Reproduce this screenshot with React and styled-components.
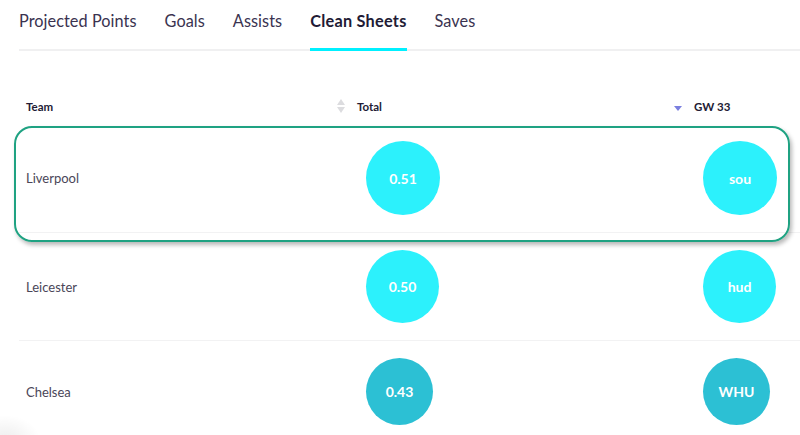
import React from 'react';
import styled, { createGlobalStyle } from 'styled-components';

/* ================= STYLES ================= */
const Global = createGlobalStyle`
  html, body { margin:0; padding:0; background:#fff; }
  body { font-family:Lato, "Noto Sans", sans-serif; overflow:hidden; }
`;

const Page = styled.div`
  position:relative;width:800px;height:435px;overflow:hidden;
  padding-left:19px;box-sizing:border-box;
`;

const TabBar = styled.div`
  display:flex;gap:28px;height:49px;border-bottom:2px solid #f0f0f1;
`;
const Tab = styled.div`
  height:51px;box-sizing:border-box;padding-top:10px;margin-bottom:-2px;
  font-size:16.3px;line-height:22px;
  letter-spacing:${p => (p.$active ? '0.25px' : '0.05px')};
  color:${p => (p.$active ? '#221b35' : '#3a3350')};
  font-weight:${p => (p.$active ? 700 : 400)};
  border-bottom:3px solid ${p => (p.$active ? '#00f0ff' : 'transparent')};
`;

const Table = styled.div`margin-top:37px;`;
const Row = styled.div`
  position:relative;display:grid;grid-template-columns:311px 337px 1fr;
  align-items:center;padding-left:7px;
  border-bottom:${p => (p.$head ? 'none' : '1px solid #f2f2f3')};
  ${p => p.$head && 'height:36px;'}
`;
const Highlight = styled.div`
  position:absolute;top:2px;left:-5px;right:10px;bottom:-10px;
  border:2px solid #1fa282;border-radius:18px;pointer-events:none;
  box-shadow:2px 3px 4px rgba(0,0,0,0.28);
`;
const HeadCell = styled.div`
  display:flex;align-items:center;gap:12px;
  font-size:11.5px;font-weight:700;color:#221b35;
`;
const TeamCell = styled.div`font-size:13px;color:#4a4658;`;
const Cell = styled.div`padding:17px 0 17px 29px;display:flex;`;
const Bubble = styled.div`
  display:flex;align-items:center;justify-content:center;border-radius:50%;
  color:#fff;font-weight:700;font-size:14px;
  background:${p => p.$bg};
`;

const Corner = styled.div`
  position:absolute;left:-30px;bottom:-30px;width:70px;height:50px;border-radius:50%;
  background:radial-gradient(closest-side, rgba(0,0,0,0.07), rgba(0,0,0,0));
`;

const SortIcon = () => (
  <svg width="8" height="14" viewBox="0 0 8 14">
    <path d="M4 0 L8 6 L0 6 Z" fill="#dcdcdf" />
    <path d="M4 14 L8 8 L0 8 Z" fill="#dcdcdf" />
  </svg>
);
const DownIcon = () => (
  <svg width="8" height="14" viewBox="0 0 8 14">
    <path d="M0 7 L8 7 L4 12 Z" fill="#7a7fdf" />
  </svg>
);

/* ================= DATA ================= */
const tabs = ['Projected Points', 'Goals', 'Assists', 'Clean Sheets', 'Saves'];
const teams = [
  { name: 'Liverpool', total: '0.51', ts: 74, tc: '#2cf1fc', opp: 'sou', os: 74, oc: '#2cf1fc', hl: true },
  { name: 'Leicester', total: '0.50', ts: 73, tc: '#2cf1fc', opp: 'hud', os: 73, oc: '#2cf1fc' },
  { name: 'Chelsea', total: '0.43', ts: 67, tc: '#2cc0d4', opp: 'WHU', os: 67, oc: '#2cc0d4' },
];

/* ================= COMPONENT ================= */
export default function App() {
  return (
    <Page>
      <Global />
      <TabBar>
        {tabs.map(t => (
          <Tab key={t} $active={t === 'Clean Sheets'}>{t}</Tab>
        ))}
      </TabBar>
      <Table>
        <Row $head>
          <HeadCell>Team</HeadCell>
          <HeadCell><SortIcon />Total</HeadCell>
          <HeadCell><DownIcon />GW 33</HeadCell>
        </Row>
        {teams.map(t => (
          <Row key={t.name}>
            {t.hl && <Highlight />}
            <TeamCell>{t.name}</TeamCell>
            <Cell>
              <Bubble $bg={t.tc} style={{ width: t.ts, height: t.ts }}>{t.total}</Bubble>
            </Cell>
            <Cell>
              <Bubble $bg={t.oc} style={{ width: t.os, height: t.os }}>{t.opp}</Bubble>
            </Cell>
          </Row>
        ))}
      </Table>
      <Corner />
    </Page>
  );
}
